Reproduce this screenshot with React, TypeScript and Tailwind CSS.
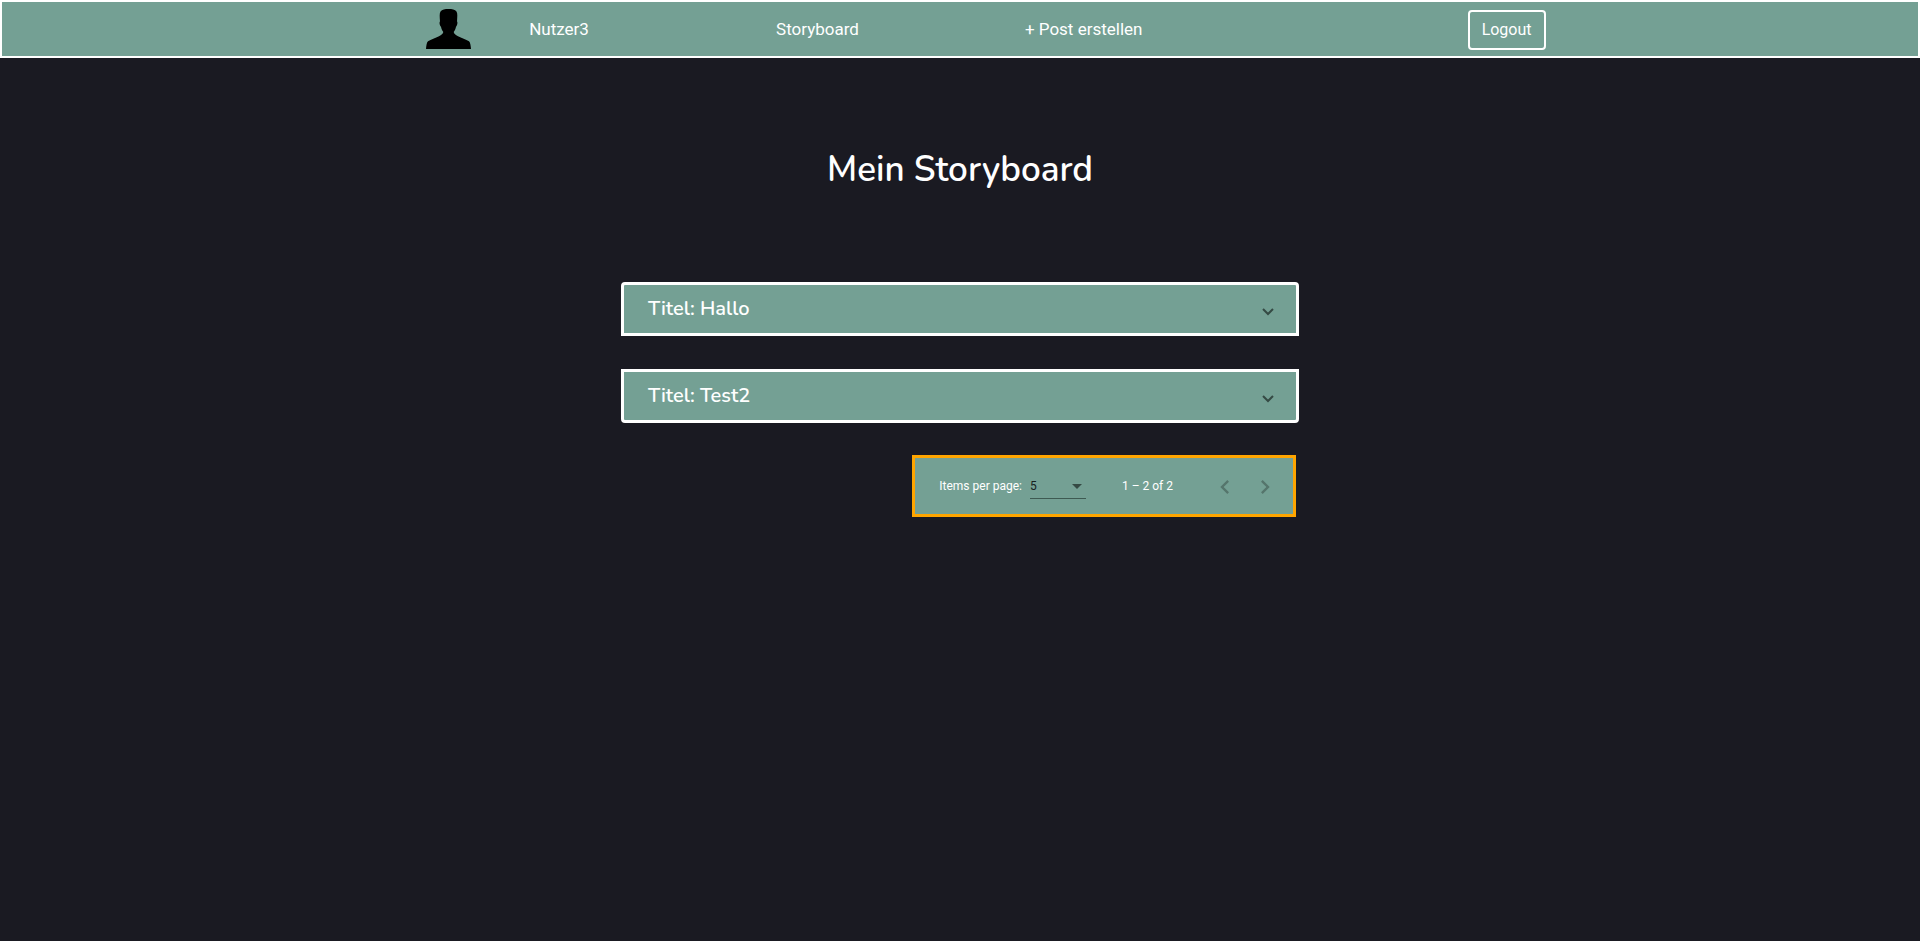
import { useState } from "react";

const posts = [
  { id: 1, title: "Titel: Hallo", corners: "rounded-t" },
  { id: 2, title: "Titel: Test2", corners: "rounded-b" },
];

function Avatar() {
  return (
    <svg viewBox="0 0 46 40" className="h-10 w-[46px]" role="img" aria-label="Profil">
      <path d="M22.500 0C19 0 16 .5 14.500 2.500 13.300 4.500 13.700 8 14 12.500c-.9.500-.3 4.300 1 5.300.4 2.200 1 3.700 2.300 5.200-.3 1.800-1.800 3-4.300 4.200C9.500 29 5 30.500 2 32.300.6 33.500.3 37 0 40h45c-.3-3-.6-6.500-2-7.700-3-1.800-7.500-3.300-11-5.100-2.500-1.200-4-2.400-4.300-4.200 1.300-1.500 1.900-3 2.300-5.200 1.300-1 1.900-4.800 1-5.300.3-4.500.7-8-.5-10C29 .5 26 0 22.500 0z" />
    </svg>
  );
}

function Header() {
  return (
    <header className="grid h-[58px] grid-cols-[103fr_247fr_249fr_443fr_auto] items-center border-2 border-white bg-[#74a094] pr-[19.400%] pl-[22.100%] text-[17px] text-white">
      <Avatar />
      <a href="#profil" className="justify-self-start pt-0.5">Nutzer3</a>
      <a href="#storyboard" className="justify-self-start pt-0.5">Storyboard</a>
      <a href="#neu" className="justify-self-start pt-0.5">+ Post erstellen</a>
      <button type="button" className="mt-px h-10 rounded border-2 border-white px-3 text-base">Logout</button>
    </header>
  );
}

function Panel({ title, corners }: { title: string; corners: string }) {
  const [open, setOpen] = useState(false);
  return (
    <section className={`${corners} border-[3px] border-white bg-[#74a094]`}>
      <button
        type="button"
        aria-expanded={open}
        onClick={() => setOpen(!open)}
        className="flex h-12 w-full items-center justify-between pr-[22px] pl-6 font-['Nunito','Lato',sans-serif] text-xl font-semibold text-white"
      >
        <span>{title}</span>
        <svg viewBox="0 0 12 8" className="mt-1.5 h-2 w-3" fill="none" stroke="#354a44" strokeWidth="2" aria-hidden="true">
          <path d="M1 1l5 5 5-5" />
        </svg>
      </button>
    </section>
  );
}

function Paginator() {
  return (
    <nav aria-label="Seiten" className="mr-[3px] flex h-[62px] items-center self-end border-[3px] border-[#ffa500] bg-[#74a094] pr-2 pl-6 text-xs text-white">
      <label htmlFor="page-size" className="mr-2">Items per page:</label>
      <span className="relative mt-1 mr-9 flex h-[22px] w-14 border-b border-[#3e5a52]">
        <select id="page-size" defaultValue="5" className="w-full appearance-none bg-transparent pb-1 text-[#17201e] outline-none">
          <option>5</option>
          <option>10</option>
          <option>25</option>
        </select>
        <svg viewBox="0 0 10 5" className="pointer-events-none absolute top-[7px] right-1 h-[5px] w-[10px]" fill="#354a44" aria-hidden="true">
          <path d="M0 0h10L5 5z" />
        </svg>
      </span>
      <span className="mr-8">1 – 2 of 2</span>
      <button type="button" disabled aria-label="Vorherige Seite" className="flex size-10 items-center justify-center pt-0.5 text-[#55756c]">
        <svg viewBox="0 0 24 24" className="size-7" fill="currentColor">
          <path d="M15.410 7.410L14 6l-6 6 6 6 1.410-1.410L10.830 12z" />
        </svg>
      </button>
      <button type="button" disabled aria-label="Nächste Seite" className="flex size-10 items-center justify-center pt-0.5 text-[#55756c]">
        <svg viewBox="0 0 24 24" className="size-7" fill="currentColor">
          <path d="M10 6L8.590 7.410 13.170 12l-4.580 4.590L10 18l6-6z" />
        </svg>
      </button>
    </nav>
  );
}

export default function App() {
  return (
    <div className="min-h-screen bg-[#1a1a22] font-['Roboto',sans-serif]">
      <Header />
      <main className="mx-auto flex w-full max-w-[678px] flex-col pt-[84px]">
        <h1 className="mb-[84px] text-center font-['Nunito','Lato',sans-serif] text-[35px] leading-14 font-semibold text-white">
          Mein Storyboard
        </h1>
        <div className="mb-8 flex flex-col gap-[33px]">
          {posts.map((post) => (
            <Panel key={post.id} title={post.title} corners={post.corners} />
          ))}
        </div>
        <Paginator />
      </main>
    </div>
  );
}
